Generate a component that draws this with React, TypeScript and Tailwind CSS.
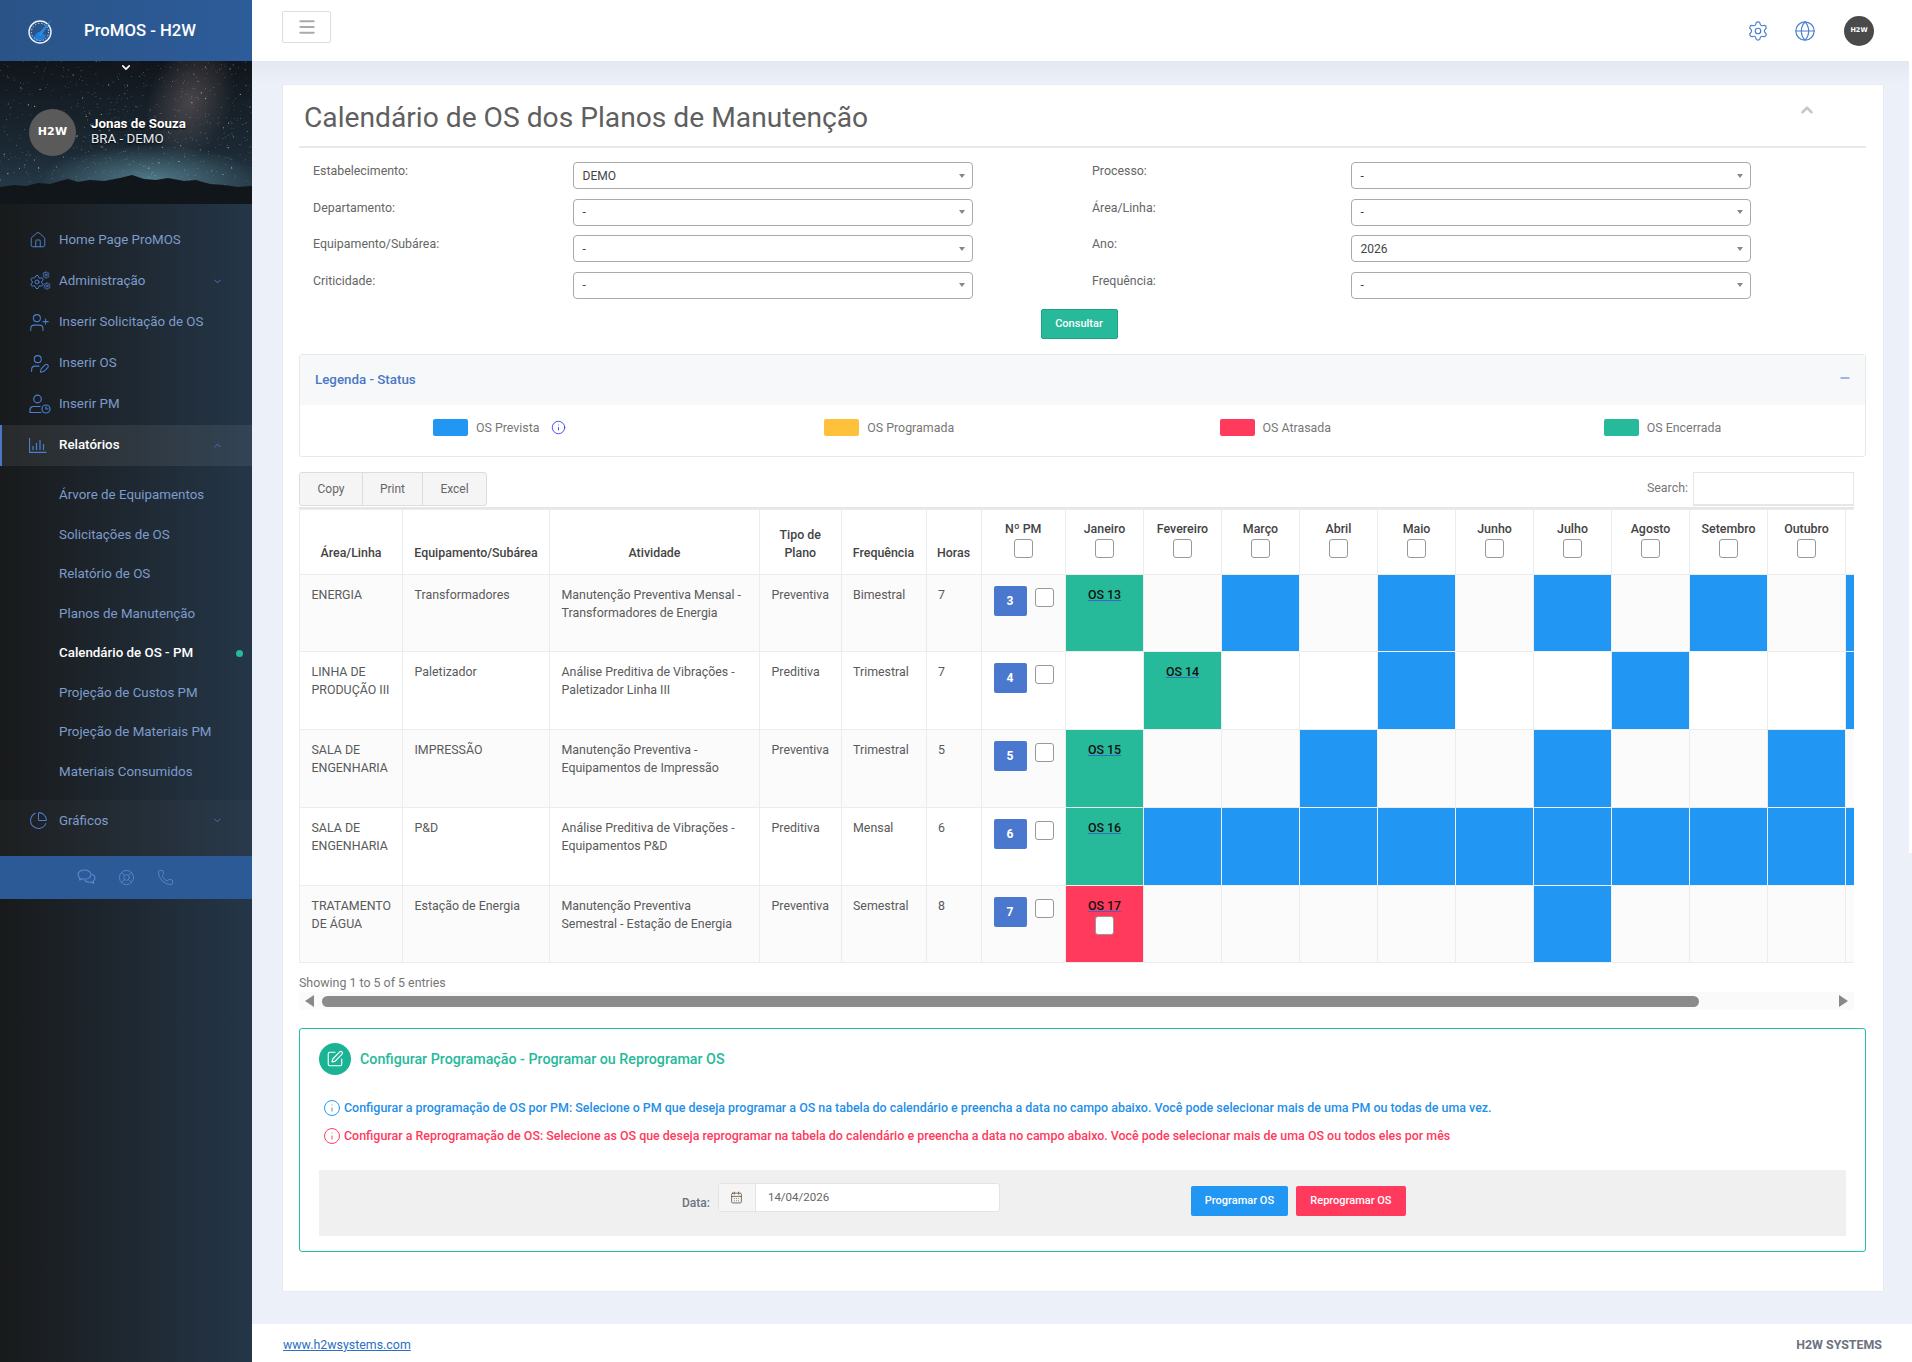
import React from 'react';
import {
  CalendarDays, ChartPie, ChevronDown, ChevronUp, Globe, House, Info, LifeBuoy, Menu,
  Minus, Phone, Settings, SquarePen, UserPen, UserPlus,
} from 'lucide-react';

type Row = {
  area: string;
  equip: string;
  atividade: string;
  tipo: string;
  freq: string;
  horas: string;
  pm: string;
  os: { month: number; label: string; late?: boolean };
  previstas: number[];
};

// the last column is scrolled out of view, only its left edge shows
const months = ['Janeiro', 'Fevereiro', 'Março', 'Abril', 'Maio', 'Junho', 'Julho', 'Agosto', 'Setembro', 'Outubro', ''];

const rows: Row[] = [
  { area: 'ENERGIA', equip: 'Transformadores', atividade: 'Manutenção Preventiva Mensal - Transformadores de Energia', tipo: 'Preventiva', freq: 'Bimestral', horas: '7', pm: '3', os: { month: 0, label: 'OS 13' }, previstas: [2, 4, 6, 8, 10] },
  { area: 'LINHA DE PRODUÇÃO III', equip: 'Paletizador', atividade: 'Análise Preditiva de Vibrações - Paletizador Linha III', tipo: 'Preditiva', freq: 'Trimestral', horas: '7', pm: '4', os: { month: 1, label: 'OS 14' }, previstas: [4, 7, 10] },
  { area: 'SALA DE ENGENHARIA', equip: 'IMPRESSÃO', atividade: 'Manutenção Preventiva - Equipamentos de Impressão', tipo: 'Preventiva', freq: 'Trimestral', horas: '5', pm: '5', os: { month: 0, label: 'OS 15' }, previstas: [3, 6, 9] },
  { area: 'SALA DE ENGENHARIA', equip: 'P&D', atividade: 'Análise Preditiva de Vibrações - Equipamentos P&D', tipo: 'Preditiva', freq: 'Mensal', horas: '6', pm: '6', os: { month: 0, label: 'OS 16' }, previstas: [1, 2, 3, 4, 5, 6, 7, 8, 9, 10] },
  { area: 'TRATAMENTO DE ÁGUA', equip: 'Estação de Energia', atividade: 'Manutenção Preventiva Semestral - Estação de Energia', tipo: 'Preventiva', freq: 'Semestral', horas: '8', pm: '7', os: { month: 0, label: 'OS 17', late: true }, previstas: [6] },
];

const filters = [
  ['Estabelecimento:', 'DEMO', 'Processo:', '-'],
  ['Departamento:', '-', 'Área/Linha:', '-'],
  ['Equipamento/Subárea:', '-', 'Ano:', '2026'],
  ['Criticidade:', '-', 'Frequência:', '-'],
];

// seeded so the star field stays the same between runs
const stars = Array.from({ length: 750 }, (_, i) => {
  const a = Math.sin(i * 12.9898) * 43758.5453;
  const b = Math.sin(i * 78.233) * 12543.1234;
  const c = Math.sin(i * 39.425) * 9871.77;
  return { x: (a - Math.floor(a)) * 252, y: (b - Math.floor(b)) * 125, o: 0.2 + (c - Math.floor(c)) * 0.6, r: i % 9 === 0 ? 0.6 : 0.35 };
});

const CogsIcon = () => (
  <svg width="22" height="20" viewBox="0 0 22 20" fill="none" className="text-[#4a7fd0]">
    <Settings x={0} y={3} width={16} height={16} strokeWidth={1.5} />
    <Settings x={13} y={0} width={8} height={8} strokeWidth={2.4} />
    <Settings x={14} y={11} width={8} height={8} strokeWidth={2.4} />
  </svg>
);

const UserClockIcon = () => (
  <svg width="22" height="20" viewBox="0 0 22 20" fill="none" stroke="currentColor" strokeWidth="1.2" strokeLinecap="round" className="text-[#4a7fd0]">
    <circle cx="8.5" cy="5" r="3.8" />
    <path d="M1 18.5v-2.5a3.5 3.5 0 0 1 3.5-3.5h6.5M1 18.5h11" />
    <circle cx="17" cy="15" r="4" />
    <path d="M17 12.8V15h2" />
  </svg>
);

const BarsIcon = () => (
  <svg width="18" height="16" viewBox="0 0 18 16" fill="none" stroke="currentColor" strokeWidth="1.2" className="text-[#4a7fd0]">
    <path d="M.5 1v14.3h17" />
    <path d="M4 13V9M7.5 13V6M11 13V3M14.5 13V7" />
  </svg>
);

const BubblesIcon = () => (
  <svg width="19" height="17" viewBox="0 0 19 17" fill="none" stroke="currentColor" strokeWidth="1.1" strokeLinejoin="round">
    <path d="M7.5 1C3.9 1 1 3 1 5.6c0 1.4.8 2.6 2.1 3.5L2.6 11l2.4-1.2c.8.2 1.6.4 2.5.4 3.6 0 6.5-2 6.5-4.6S11.100 1 7.500 1z" />
    <path d="M14.800 5.200c1.900.7 3.200 2.100 3.200 3.800 0 1.200-.7 2.300-1.800 3.100l.5 2.400-2.500-1.500c-.6.1-1.200.2-1.900.2-2 0-3.800-.8-4.800-2" />
  </svg>
);

const GaugeLogo = () => (
  <svg width="26" height="26" viewBox="0 0 26 26" fill="none">
    <path d="M12 23a9 9 0 0 1-7-3.400l5-5.600 8 3a9 9 0 0 1-6 6z" fill="#1f7fd6" />
    <circle cx="12" cy="14" r="11" stroke="#eef2f8" strokeWidth="1.4" />
    <circle cx="12" cy="14" r="8.600" stroke="#dfe6f1" strokeWidth="1" strokeDasharray="1.2 2" />
    <path d="M10 16 24 1l-11 17z" fill="#2a8be0" />
  </svg>
);

const H2w = ({ className }: { className: string }) => (
  <span className={`font-['DejaVu_Sans',sans-serif] font-bold text-white ${className}`}>H2W</span>
);

const Banner = () => (
  <div className="relative h-[143px] overflow-hidden">
    <svg className="absolute inset-0" width="252" height="143" viewBox="0 0 252 143">
      <defs>
        <linearGradient id="sky" x1="0" y1="0" x2="0" y2="1">
          <stop offset="0" stopColor="#11151b" />
          <stop offset="0.65" stopColor="#1c2a35" />
          <stop offset="1" stopColor="#2b4150" />
        </linearGradient>
        <radialGradient id="milky" cx="0.5" cy="0.5" r="0.5">
          <stop offset="0" stopColor="#6a5f60" stopOpacity="0.6" />
          <stop offset="1" stopColor="#6a5f60" stopOpacity="0" />
        </radialGradient>
        <radialGradient id="glow" cx="0.5" cy="0.5" r="0.5">
          <stop offset="0" stopColor="#55808f" stopOpacity="0.9" />
          <stop offset="1" stopColor="#55808f" stopOpacity="0" />
        </radialGradient>
      </defs>
      <rect width="252" height="143" fill="url(#sky)" />
      <ellipse cx="190" cy="40" rx="42" ry="62" fill="url(#milky)" transform="rotate(20 190 40)" />
      <ellipse cx="150" cy="118" rx="110" ry="34" fill="url(#glow)" />
      {stars.map((s, i) => (
        <circle key={i} cx={s.x} cy={s.y} r={s.r} fill="#fff" opacity={s.o} />
      ))}
      <path d="M0 126l14-2 12 1 12-3 12 1 10-3 8-2 10 3 12-2 14 1 16-3 12-3 12 4 12 1 12-2 16 3 12-1 14 4 14 1 14 2 14-1v20H0z" fill="#11161b" />
    </svg>
    <div className="absolute left-1/2 top-[-14px] flex h-[29px] w-[29px] -translate-x-1/2 items-end justify-center rounded-full bg-[#14181e] pb-[2px]">
      <ChevronDown size={13} strokeWidth={3} className="text-white" />
    </div>
    <div className="relative flex items-center pl-[29px] pt-[48px]">
      <div className="flex h-[47px] w-[47px] items-center justify-center rounded-full bg-[#5a5a5a]">
        <H2w className="text-[11px] tracking-[0.2px]" />
      </div>
      <div className="ml-[15px] mt-[-4px] text-[13.33px] leading-[15px] text-white [text-shadow:0_1px_2px_#000]">
        <div className="font-bold">Jonas de Souza</div>
        <div className="text-[#e8ecf2]">BRA - DEMO</div>
      </div>
    </div>
  </div>
);

const NavItem = ({ icon, label, caret, active }: { icon: React.ReactNode; label: string; caret?: 'up' | 'down'; active?: boolean }) => (
  <div className={`flex h-[41px] items-center pr-[29px] ${active ? 'border-l-2 border-[#4a78c4] bg-white/[0.07] pl-[27px]' : 'pl-[29px]'}`}>
    <span className="flex w-[30px] shrink-0 items-center">{icon}</span>
    <span className={`text-[13.33px] ${active ? 'font-medium text-white' : 'text-[#7e9ccb]'}`}>{label}</span>
    {caret === 'down' && <ChevronDown size={11} strokeWidth={2} className="ml-auto text-[#4a78c4]" />}
    {caret === 'up' && <ChevronUp size={11} strokeWidth={2} className="ml-auto text-[#4a78c4]" />}
  </div>
);

const subItems = ['Árvore de Equipamentos', 'Solicitações de OS', 'Relatório de OS', 'Planos de Manutenção', 'Calendário de OS - PM', 'Projeção de Custos PM', 'Projeção de Materiais PM', 'Materiais Consumidos'];

const Sidebar = () => (
  <aside className="w-[252px] shrink-0 bg-linear-to-r from-[#181a1b] to-[#243648]">
    <div className="flex h-[61px] items-center bg-linear-to-r from-[#2a5488] to-[#2d5c9a] pl-[28px]">
      <GaugeLogo />
      <span className="ml-[30px] text-[16.7px] font-medium text-white">ProMOS - H2W</span>
    </div>
    <Banner />
    <nav className="pt-[15.75px]">
      <NavItem icon={<House size={18} strokeWidth={1.3} className="text-[#4a7fd0]" />} label="Home Page ProMOS" />
      <NavItem icon={<CogsIcon />} label="Administração" caret="down" />
      <NavItem icon={<UserPlus size={21} strokeWidth={1.2} className="text-[#4a7fd0]" />} label="Inserir Solicitação de OS" />
      <NavItem icon={<UserPen size={21} strokeWidth={1.2} className="text-[#4a7fd0]" />} label="Inserir OS" />
      <NavItem icon={<UserClockIcon />} label="Inserir PM" />
      <NavItem icon={<BarsIcon />} label="Relatórios" caret="up" active />
      <div className="pb-[9px] pt-[10px]">
        {subItems.map((item) => {
          const current = item === 'Calendário de OS - PM';
          return (
            <div key={item} className={`flex h-[39.45px] items-center pl-[59px] pr-[9px] text-[13.33px] ${current ? 'font-medium text-white' : 'text-[#7e9ccb]'}`}>
              {item}
              {current && <span className="ml-auto h-[7px] w-[7px] rounded-full bg-[#26b99a]" />}
            </div>
          );
        })}
      </div>
      <div className="bg-white/[0.025] pb-[15px]">
        <NavItem icon={<ChartPie size={19} strokeWidth={1.3} className="text-[#4a7fd0]" />} label="Gráficos" caret="down" />
      </div>
    </nav>
    <div className="flex h-[43px] items-center justify-center gap-[22px] bg-[#2c5a96] pr-[2px] text-[#5a8ad2]">
      <BubblesIcon />
      <LifeBuoy size={17} strokeWidth={1.2} />
      <Phone size={17} strokeWidth={1.2} />
    </div>
  </aside>
);

const Select = ({ value }: { value: string }) => (
  <div className="flex h-[27px] w-[400px] items-center justify-between rounded-[4px] border border-[#aaa] bg-white pl-[9px] pr-[7px] text-[12px] text-[#444]">
    <span>{value}</span>
    <span className="h-0 w-0 border-x-[3px] border-t-[4px] border-x-transparent border-t-[#888]" />
  </div>
);

const Filters = () => (
  <div className="pl-[14px] pt-[14px]">
    {filters.map(([l1, v1, l2, v2]) => (
      <div key={l1} className="flex h-[36.67px] text-[12.4px] text-[#666]">
        <span className="w-[259.5px] shrink-0 leading-[18px]">{l1}</span>
        <Select value={v1} />
        <span className="ml-[119.5px] w-[258.5px] shrink-0 leading-[18px]">{l2}</span>
        <Select value={v2} />
      </div>
    ))}
  </div>
);

const Swatch = ({ color, label, className, children }: { color: string; label: string; className: string; children?: React.ReactNode }) => (
  <div className={`flex items-center ${className}`}>
    <span className={`h-[17px] w-[35px] rounded-[2px] ${color}`} />
    <span className="ml-[8px] text-[12.4px] text-[#777]">{label}</span>
    {children}
  </div>
);

const Legend = () => (
  <div className="mt-[15px] rounded-[3px] border border-[#e8e8e8]">
    <div className="flex h-[50px] items-center justify-between bg-[#f7f8fa] pl-[15px] pr-[13px]">
      <span className="text-[13.33px] font-medium text-[#4a78c4]">Legenda - Status</span>
      <Minus size={14} strokeWidth={2} className="mb-[4px] text-[#4a78c4]" />
    </div>
    <div className="grid h-[51px] grid-cols-4 items-start pt-[14px]">
      <Swatch color="bg-[#2196f3]" label="OS Prevista" className="pl-[133px]">
        <Info size={15} strokeWidth={1.3} className="ml-[11px] text-[#2a2ae8]" />
      </Swatch>
      <Swatch color="bg-[#ffc13b]" label="OS Programada" className="pl-[133px]" />
      <Swatch color="bg-[#ff3a5c]" label="OS Atrasada" className="pl-[137px]" />
      <Swatch color="bg-[#26b99a]" label="OS Encerrada" className="pl-[130px]" />
    </div>
  </div>
);

const Check = () => (
  <input type="checkbox" readOnly className="block h-[19px] w-[19px] appearance-none rounded-[3px] border border-[#999] bg-white" />
);

const Toolbar = () => (
  <div className="mt-[15px] flex h-[34px] justify-between pr-[12px]">
    <div className="flex rounded-[3px] border border-[#ddd] bg-[#f5f5f5] text-[12px] text-[#666]">
      <span className="flex w-[63px] items-center justify-center border-r border-[#ddd]">Copy</span>
      <span className="flex w-[60px] items-center justify-center border-r border-[#ddd]">Print</span>
      <span className="flex w-[63px] items-center justify-center">Excel</span>
    </div>
    <div className="flex items-center text-[12.4px] text-[#777]">
      <span className="mr-[5px]">Search:</span>
      <div className="h-full w-[161px] border border-b-2 border-[#e6e6e6] bg-white" />
    </div>
  </div>
);

const Th = ({ children, className = '' }: { children: React.ReactNode; className?: string }) => (
  <th className={`border border-[#ececec] text-center align-bottom text-[12.4px] font-medium leading-[18px] text-[#444] ${className}`}>{children}</th>
);

const Td = ({ children }: { children: React.ReactNode }) => (
  <td className="border border-[#ececec] pl-[11.5px] pr-[12px] pt-[11px] align-top text-[12.4px] leading-[18px] text-[#5a5a5a]">{children}</td>
);

const MonthCell = ({ row, month }: { row: Row; month: number }) => {
  if (row.os.month === month) {
    return (
      <td className={`border border-[#ececec] pt-[11px] text-center align-top text-[12.4px] font-medium leading-[18px] text-[#111] ${row.os.late ? 'bg-[#ff3a5c]' : 'bg-[#26b99a]'}`}>
        <span className="underline decoration-[#3a66c4]">{row.os.label}</span>
        {row.os.late && (
          <div className="flex justify-center pt-[1px]">
            <Check />
          </div>
        )}
      </td>
    );
  }
  if (row.previstas.includes(month)) return <td className="border border-[#eef3f8] bg-[#2196f3]" />;
  return <td className="border border-[#ececec]" />;
};

const CalendarTable = () => (
  <div className="mr-[12px] overflow-hidden border-t-2 border-[#e6e6e6]">
    <table className="w-[1624px] table-fixed border-collapse">
      <colgroup>
        <col className="w-[103px]" />
        <col className="w-[147px]" />
        <col className="w-[210px]" />
        <col className="w-[81.5px]" />
        <col className="w-[85px]" />
        <col className="w-[55px]" />
        <col className="w-[84.5px]" />
        {months.map((m) => (
          <col key={m} className="w-[78px]" />
        ))}
      </colgroup>
      <thead>
        <tr className="h-[65px] bg-white">
          <Th className="pb-[12px]">Área/Linha</Th>
          <Th className="whitespace-nowrap pb-[12px]">Equipamento/Subárea</Th>
          <Th className="pb-[12px]">Atividade</Th>
          <Th className="px-[12px] pb-[12px]">Tipo de Plano</Th>
          <Th className="pb-[12px]">Frequência</Th>
          <Th className="pb-[12px]">Horas</Th>
          <Th className="pb-[16px]">
            Nº PM
            <div className="flex justify-center pt-[1px]"><Check /></div>
          </Th>
          {months.map((m) => (
            <Th key={m} className="pb-[16px]">
              {m}
              {m && <div className="flex justify-center pt-[1px]"><Check /></div>}
            </Th>
          ))}
        </tr>
      </thead>
      <tbody>
        {rows.map((row, i) => (
          <tr key={row.pm} className={`h-[77.75px] ${i % 2 === 0 ? 'bg-[#fbfbfb]' : 'bg-white'}`}>
            <Td>{row.area}</Td>
            <Td>{row.equip}</Td>
            <Td>{row.atividade}</Td>
            <Td>{row.tipo}</Td>
            <Td>{row.freq}</Td>
            <Td>{row.horas}</Td>
            <td className="border border-[#ececec] pl-[12px] pt-[11px] align-top">
              <div className="flex items-start">
                <span className="flex h-[30px] w-[33px] items-center justify-center rounded-[2px] bg-[#4a78cf] text-[12px] font-bold text-white">{row.pm}</span>
                <span className="ml-[8px] mt-[2px]"><Check /></span>
              </div>
            </td>
            {months.map((m, month) => (
              <MonthCell key={m} row={row} month={month} />
            ))}
          </tr>
        ))}
      </tbody>
    </table>
  </div>
);

const FakeScrollbar = () => (
  <div className="mr-[12px] flex h-[18px] items-center bg-[#fafafa] px-[6px]">
    <span className="h-0 w-0 border-y-[6px] border-r-[9px] border-y-transparent border-r-[#888]" />
    <span className="ml-[8px] h-[11px] w-[1377px] rounded-full bg-[#8a8a8a]" />
    <span className="ml-auto h-0 w-0 border-y-[6px] border-l-[9px] border-y-transparent border-l-[#888]" />
  </div>
);

const Programacao = () => (
  <div className="mt-[18px] h-[224px] rounded-[3px] border border-[#1fbfa6] px-[19px] pt-[14px]">
    <div className="flex items-center">
      <span className="flex h-[32px] w-[32px] items-center justify-center rounded-full bg-[#1ab394] text-white">
        <SquarePen size={18} strokeWidth={1.5} />
      </span>
      <span className="ml-[9px] text-[14.25px] font-medium text-[#26b99a]">Configurar Programação - Programar ou Reprogramar OS</span>
    </div>
    <div className="mt-[24px] flex h-[18px] items-center pl-[4px] text-[12.44px] font-medium text-[#1f8fe8]">
      <Info size={18} strokeWidth={1.3} className="shrink-0 text-[#2196f3]" />
      <span className="ml-[3px] whitespace-nowrap">Configurar a programação de OS por PM: Selecione o PM que deseja programar a OS na tabela do calendário e preencha a data no campo abaixo. Você pode selecionar mais de uma PM ou todas de uma vez.</span>
    </div>
    <div className="mt-[10px] flex h-[18px] items-center pl-[4px] text-[12.44px] font-medium text-[#ff3a5c]">
      <Info size={18} strokeWidth={1.3} className="shrink-0" />
      <span className="ml-[3px] whitespace-nowrap">Configurar a Reprogramação de OS: Selecione as OS que deseja reprogramar na tabela do calendário e preencha a data no campo abaixo. Você pode selecionar mais de uma OS ou todos eles por mês</span>
    </div>
    <div className="mt-[25px] flex h-[66px] bg-[#f0f0f0] pt-[13px]">
      <span className="ml-[363px] mt-[11px] text-[12px] font-medium text-[#6b7280]">Data:</span>
      <div className="ml-[8px] flex h-[29px] w-[282px] rounded-[3px] border border-[#e3e3e3] bg-white text-[11.5px] text-[#666]">
        <span className="flex w-[37px] items-center justify-center border-r border-[#e3e3e3] bg-[#f5f5f5]">
          <CalendarDays size={13} strokeWidth={1.6} className="text-[#6b5b4a]" />
        </span>
        <span className="flex items-center pl-[12px]">14/04/2026</span>
      </div>
      <span className="ml-[191px] mt-[3px] flex h-[30px] w-[97px] items-center justify-center rounded-[2px] bg-[#2196f3] text-[11px] font-medium text-white">Programar OS</span>
      <span className="ml-[8px] mt-[3px] flex h-[30px] w-[110px] items-center justify-center rounded-[2px] bg-[#ff3a5c] text-[11px] font-medium text-white">Reprogramar OS</span>
    </div>
  </div>
);

export default function App() {
  return (
    <div className="relative flex h-[1362px] overflow-hidden bg-[#ecf0f8] font-[Roboto,sans-serif]">
      <Sidebar />
      <div className="flex min-w-0 flex-1 flex-col">
        <header className="flex h-[61px] shrink-0 items-center justify-between bg-white pl-[30px] pr-[38px]">
          <button className="mb-[8px] flex h-[32px] w-[49px] items-center justify-center rounded-[2px] border border-[#ddd] text-[#aaa]">
            <Menu size={20} strokeWidth={2.4} />
          </button>
          <div className="flex items-center text-[#4a7fd0]">
            <Settings size={22} strokeWidth={1.3} />
            <Globe size={22} strokeWidth={1.3} className="ml-[25px]" />
            <span className="ml-[28px] flex h-[30px] w-[30px] items-center justify-center rounded-full bg-[#4a4a4a]">
              <H2w className="text-[6.5px]" />
            </span>
          </div>
        </header>
        <div className="h-[23px] shrink-0 bg-linear-to-b from-[#e4e8f2] to-[#ecf0f8]" />
        <main className="ml-[30px] mr-[28px] h-[1208px] shrink-0 border border-[#e8ebf0] bg-white pl-[16px] pr-[16px]">
          <div className="mr-[1px] flex h-[63px] items-start justify-between border-b-2 border-[#e6e9ed] pl-[5px] pr-[50px]">
            <h1 className="pt-[16px] text-[28.2px] font-normal leading-[34px] text-[#5f5f5f]">Calendário de OS dos Planos de Manutenção</h1>
            <ChevronUp size={18} strokeWidth={3.5} className="mt-[16px] text-[#c5c9cf]" />
          </div>
          <Filters />
          <div className="flex justify-center">
            <button className="ml-[-8px] flex h-[30px] w-[77px] items-center justify-center rounded-[2px] border border-[#1ea387] bg-[#26b99a] pt-[1px] text-[11px] font-medium text-white">Consultar</button>
          </div>
          <div className="mr-[1px]">
            <Legend />
            <Toolbar />
            <div className="pt-[1px]">
              <CalendarTable />
            </div>
            <div className="mt-[11px] h-[18px] text-[12.4px] leading-[18px] text-[#777]">Showing 1 to 5 of 5 entries</div>
            <FakeScrollbar />
            <Programacao />
          </div>
        </main>
        <div className="mt-auto flex h-[38px] shrink-0 items-center justify-between bg-white pl-[31px] pr-[30px] pt-[4px] text-[12.4px]">
          <a className="text-[#2a6fc4] underline" href="#">www.h2wsystems.com</a>
          <span className="font-bold text-[#6b7280]">H2W SYSTEMS</span>
        </div>
      </div>
      <div className="absolute right-0 top-[61px] h-[792px] w-[3px] bg-white" />
    </div>
  );
}
